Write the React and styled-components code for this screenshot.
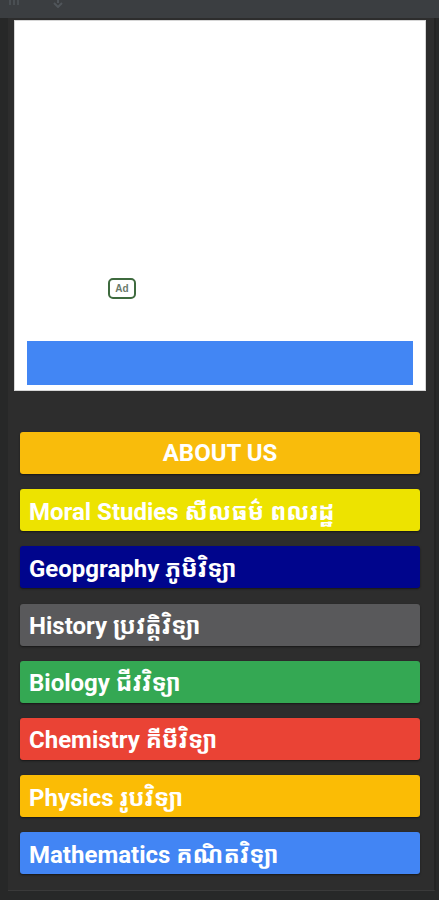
import React from 'react';
import styled, { createGlobalStyle } from 'styled-components';

const GlobalStyle = createGlobalStyle`
  html, body {
    margin: 0;
    padding: 0;
    background-color: #262727;
  }
  body {
    font-family: Roboto, "Noto Sans Khmer", "Noto Sans", sans-serif;
  }
`;

const Screen = styled.div`
  width: 439px;
  height: 900px;
  overflow: hidden;
  display: flex;
  flex-direction: column;
  background-color: #282828;
`;

const TopBar = styled.div`
  height: 18px;
  flex-shrink: 0;
  background-color: #3b3e41;
  display: flex;
  align-items: flex-start;
  gap: 30px;
  padding-left: 8px;
  overflow: hidden;
`;

const Frame = styled.div`
  display: flex;
  flex: 1;
  padding-left: 8px;
  padding-right: 3px;
  background-color: #272828;
`;

const Panel = styled.div`
  flex: 1;
  height: 870px;
  background-color: #2d2d2d;
  border-right: 2px solid #232323;
  border-bottom: 1px solid #3a3a3a;
  display: flex;
  flex-direction: column;
  padding: 2px 8px 0 6px;
`;

const AdBox = styled.div`
  height: 371px;
  background-color: #ffffff;
  border: 1px solid #d6d6d6;
  box-sizing: border-box;
  display: flex;
  flex-direction: column;
  justify-content: flex-end;
  padding: 0 12px 5px 12px;
`;

const AdArea = styled.div`
  flex: 1;
  display: flex;
  align-items: flex-end;
  padding: 0 0 42px 81px;
`;

const AdBadge = styled.div`
  width: 28px;
  height: 21px;
  box-sizing: border-box;
  border: 2px solid #3e6a3e;
  border-radius: 5px;
  color: #6b7a6b;
  font-family: "Liberation Sans", Arial, sans-serif;
  font-size: 10px;
  font-weight: bold;
  display: flex;
  align-items: center;
  justify-content: center;
`;

const AdBanner = styled.div`
  height: 44px;
  background-color: #4286f4;
`;

const Menu = styled.div`
  display: flex;
  flex-direction: column;
  gap: 15.2px;
  padding: 41px 6px 0 6px;
`;

const MenuButton = styled.div`
  height: 42px;
  box-sizing: border-box;
  background-color: ${p => p.color};
  border-radius: 3px;
  box-shadow: 0 1px 2px rgba(0, 0, 0, 0.5);
  color: #ffffff;
  font-size: 24px;
  font-weight: bold;
  display: flex;
  align-items: center;
  justify-content: ${p => (p.center ? 'center' : 'flex-start')};
  padding-left: ${p => (p.center ? '0' : '9px')};
  white-space: nowrap;
  overflow: hidden;
`;

const subjects = [
  { label: 'ABOUT US', color: '#f9bc0b', center: true },
  { label: 'Moral Studies សីលធម៌ ពលរដ្ឋ', color: '#ede300' },
  { label: 'Geopgraphy ភូមិវិទ្យា', color: '#00058c' },
  { label: 'History ប្រវត្តិវិទ្យា', color: '#59595b' },
  { label: 'Biology ជីវវិទ្យា', color: '#34a853' },
  { label: 'Chemistry គីមីវិទ្យា', color: '#ea4335' },
  { label: 'Physics រូបវិទ្យា', color: '#fbbc05' },
  { label: 'Mathematics គណិតវិទ្យា', color: '#4285f4' },
];

export default function App() {
  return (
    <Screen>
      <GlobalStyle />
      <TopBar>
        <svg width="14" height="6" viewBox="0 0 14 6">
          <path d="M2 0v5M6 0v5M10 0v5" stroke="#50555a" strokeWidth="1.5" />
        </svg>
        <svg width="12" height="8" viewBox="0 0 12 8">
          <path d="M6 0v3M2 3l4 4 4-4" stroke="#50555a" strokeWidth="2" fill="none" />
        </svg>
      </TopBar>
      <Frame>
        <Panel>
          <AdBox>
            <AdArea>
              <AdBadge>Ad</AdBadge>
            </AdArea>
            <AdBanner />
          </AdBox>
          <Menu>
            {subjects.map(s => (
              <MenuButton key={s.label} color={s.color} center={s.center}>
                {s.label}
              </MenuButton>
            ))}
          </Menu>
        </Panel>
      </Frame>
    </Screen>
  );
}
